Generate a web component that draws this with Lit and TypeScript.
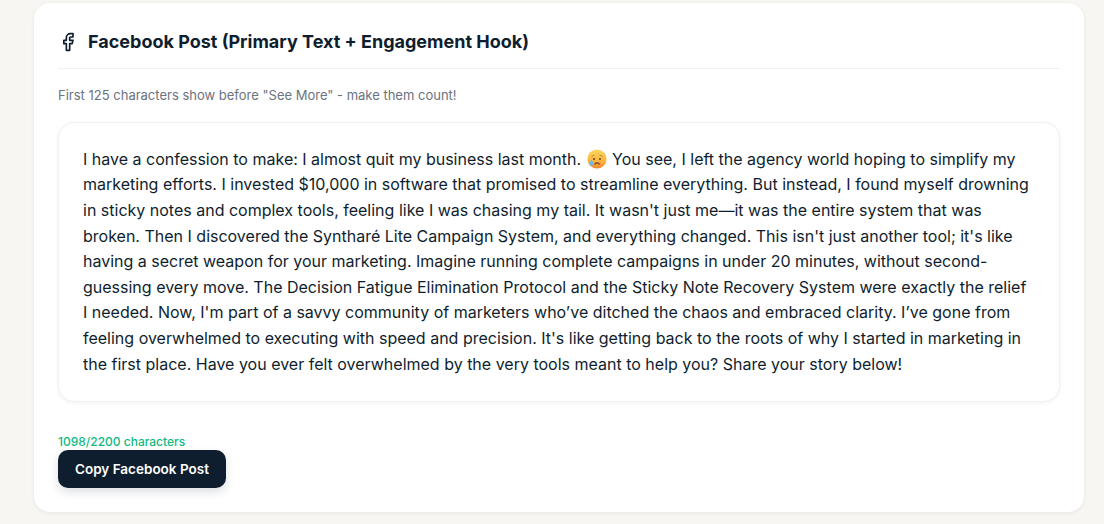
import { LitElement, html, css } from "lit";
import { customElement } from "lit/decorators.js";

@customElement("app-root")
export class AppRoot extends LitElement {
  static styles = css`
    :host {
      display: block;
      height: 524px;
      overflow: hidden;
      background: #f8f6f2;
      font-family: Inter, "Liberation Sans", sans-serif;
      color: #0f1e2e;
    }
    .page {
      padding: 3px 20px 0 34px;
    }
    .card {
      box-sizing: border-box;
      height: 509px;
      background: #fff;
      border-radius: 16px;
      padding: 24px;
      box-shadow: 0 1px 4px rgba(15, 30, 46, 0.07);
    }
    .head {
      display: flex;
      align-items: center;
      gap: 10px;
      height: 30px;
      padding: 0 0 11px;
      border-bottom: 1px solid #eef0f1;
      margin-bottom: 17px;
    }
    .head svg {
      width: 20px;
      height: 20px;
      display: block;
    }
    h2 {
      margin: 0;
      font-size: 18px;
      line-height: 28px;
      font-weight: 700;
    }
    .hint {
      margin: 0 0 16.5px;
      font-size: 13px;
      line-height: 19px;
      color: #6b7280;
    }
    .box {
      border: 1px solid #f0f1f2;
      border-radius: 16px;
      padding: 24.35px 24px 23.65px;
      background: #fff;
      box-shadow: 0 1px 4px rgba(15, 30, 46, 0.06);
      font-size: 16px;
      line-height: 25.6px;
      margin-bottom: 31.5px;
    }
    .emoji {
      display: inline-block;
      width: 20px;
      height: 20px;
      margin: 0 1px;
      vertical-align: -4px;
    }
    .count {
      font-size: 12px;
      line-height: 17px;
      font-weight: 500;
      color: #10b981;
    }
    button {
      display: block;
      border: none;
      height: 38px;
      padding: 0 17px;
      border-radius: 10px;
      background: #0f1e2e;
      color: #fff;
      font: 600 13.5px/20px Inter, "Liberation Sans", sans-serif;
      box-shadow: 0 4px 10px rgba(15, 30, 46, 0.14);
    }
  `;

  render() {
    return html`<div class="page">
      <section class="card">
        <div class="head">
          <svg viewBox="0 0 24 24" fill="none" stroke="#0f1e2e" stroke-width="2" stroke-linecap="round" stroke-linejoin="round">
            <path d="M18 2h-3a5 5 0 0 0-5 5v3H7v4h3v8h4v-8h3l1-4h-4V7a1 1 0 0 1 1-1h3z" />
          </svg>
          <h2>Facebook Post (Primary Text + Engagement Hook)</h2>
        </div>
        <p class="hint">First 125 characters show before "See More" - make them count!</p>
        <div class="box">
          I have a confession to make: I almost quit my business last month.
          <svg class="emoji" viewBox="0 0 20 20" role="img" aria-label="sad face">
            <defs>
              <linearGradient id="f" x1="0" y1="0" x2="0" y2="1">
                <stop offset="0" stop-color="#fdd75e" />
                <stop offset="0.6" stop-color="#fbb640" />
                <stop offset="1" stop-color="#f2862e" />
              </linearGradient>
            </defs>
            <circle cx="10" cy="10" r="9.6" fill="url(#f)" />
            <path d="M4.8 7.4 7 6.3M15.2 7.4 13 6.3" stroke="#b07a30" stroke-width="0.8" fill="none" stroke-linecap="round" />
            <circle cx="7" cy="10" r="0.9" fill="#4e3222" />
            <circle cx="13" cy="10" r="0.9" fill="#4e3222" />
            <path d="M7.8 15q2.2-2.1 4.4 0" stroke="#7a3a22" stroke-width="1.2" fill="none" stroke-linecap="round" />
            <path d="M4.4 10.8c-1.3 1.8-2 2.8-2 3.8a2 2 0 0 0 4 0c0-1-.7-2-2-3.8z" fill="#6cb8e6" />
          </svg>
          You see, I left the agency world hoping to simplify my marketing efforts. I invested $10,000 in software that promised to streamline everything. But instead, I found myself drowning in sticky notes and complex tools, feeling like I was chasing my tail. It wasn't just me—it was the entire system that was broken. Then I discovered the Syntharé Lite Campaign System, and everything changed. This isn't just another tool; it's like having a secret weapon for your marketing. Imagine running complete campaigns in under 20 minutes, without second-guessing every move. The Decision Fatigue Elimination Protocol and the Sticky Note Recovery System were exactly the relief I needed. Now, I'm part of a savvy community of marketers who’ve ditched the chaos and embraced clarity. I’ve gone from feeling overwhelmed to executing with speed and precision. It's like getting back to the roots of why I started in marketing in the first place. Have you ever felt overwhelmed by the very tools meant to help you? Share your story below!
        </div>
        <div class="count">1098/2200 characters</div>
        <button>Copy Facebook Post</button>
      </section>
    </div>`;
  }
}
